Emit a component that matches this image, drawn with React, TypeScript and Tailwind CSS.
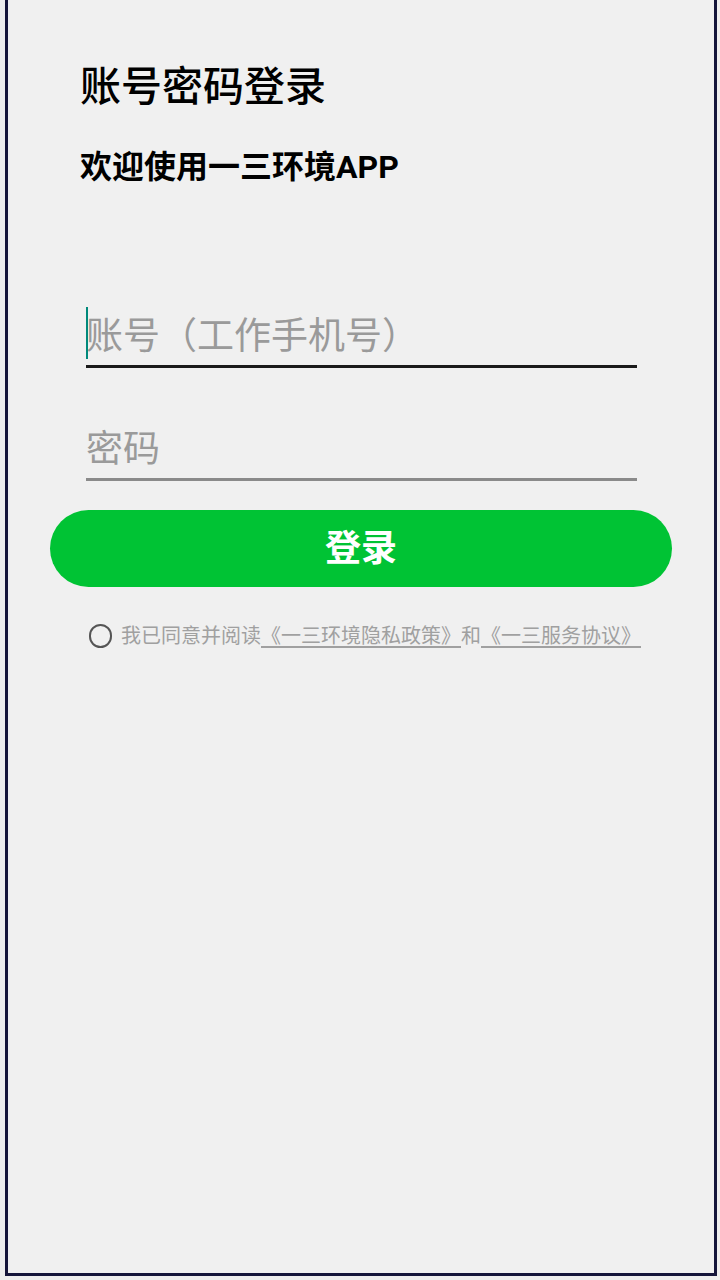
import React, { useState } from 'react';

const FONT = { fontFamily: 'Roboto, "Noto Sans CJK SC", sans-serif' };

export default function App() {
  const [account, setAccount] = useState('');
  const [password, setPassword] = useState('');
  const [agreed, setAgreed] = useState(false);

  return (
    <div className="w-[720px] h-[1280px] bg-[#eeeeee] overflow-hidden" style={FONT}>
      {/* Phone frame */}
      <div className="ml-[5px] w-[712px] h-[1276px] border-x-[3px] border-b-[3px] border-[#15153a] bg-[#f0f0f0] flex flex-col">
        {/* Header */}
        <div className="pl-[72px] pt-[63px]">
          <h1 className="text-[41px] leading-[48px] font-medium text-black">账号密码登录</h1>
          <p className="mt-[37px] text-[32px] leading-[38px] font-bold text-black">欢迎使用一三环境APP</p>
        </div>

        {/* Form */}
        <div className="mt-[121px] ml-[78px] w-[551px] flex flex-col">
          <div className="relative border-b-[3px] border-[#1a1a1a]">
            <span className="absolute left-0 top-[0px] w-[2px] h-[52px] bg-[#00897b]" />
            <input
              value={account}
              onChange={(e) => setAccount(e.target.value)}
              placeholder="账号（工作手机号）"
              className="w-full h-[58px] bg-transparent outline-none text-[37px] text-black placeholder:text-[#9a9a9a]"
            />
          </div>
          <div className="mt-[52px] border-b-[3px] border-[#8a8a8a]">
            <input
              type="password"
              value={password}
              onChange={(e) => setPassword(e.target.value)}
              placeholder="密码"
              className="w-full h-[58px] bg-transparent outline-none text-[37px] text-black placeholder:text-[#9a9a9a]"
            />
          </div>
        </div>

        <button className="mt-[29px] ml-[42px] w-[622px] h-[77px] rounded-full bg-[#00c334] text-white text-[36px] font-bold flex items-center justify-center">
          登录
        </button>

        {/* Agreement */}
        <div className="mt-[35px] ml-[81px] flex items-center gap-[9px] text-[20px] text-[#a0a0a0]">
          <button
            onClick={() => setAgreed(!agreed)}
            className="w-[23px] h-[24px] rounded-full border-[2px] border-[#555555] flex items-center justify-center"
          >
            {agreed && <span className="w-[11px] h-[11px] rounded-full bg-[#00c334]" />}
          </button>
          <p className="leading-[28px]">
            我已同意并阅读
            <span className="underline underline-offset-[3px]">《一三环境隐私政策》</span>
            和
            <span className="underline underline-offset-[3px]">《一三服务协议》</span>
          </p>
        </div>
      </div>
    </div>
  );
}
